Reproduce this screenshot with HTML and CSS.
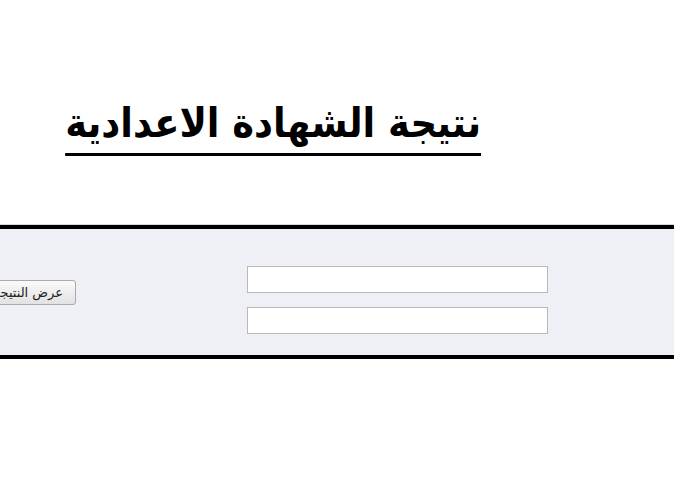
FILE: index.html
```html
<!DOCTYPE html>
<html lang="ar">
<head>
  <meta charset="UTF-8">
  <title>نتيجة الشهادة الاعدادية</title>
  <link rel="stylesheet" href="styles.css">
</head>
<body>
  <div class="header">
    <h1 class="title">نتيجة الشهادة الاعدادية</h1>
  </div>

  <div class="searchBox">
    <button class="showBtn">عرض النتيجة</button>
    <div class="fields">
      <input type="text" class="field">
      <input type="text" class="field">
    </div>
  </div>
</body>
</html>
```

FILE: styles.css
```css
html, body {
  margin: 0;
  padding: 0;
  background: #fff;
  overflow: hidden;
}

.header {
  padding-top: 100px;
  padding-right: 193px;
  text-align: right;
  height: 128px;
  box-sizing: border-box;
}

.title {
  display: inline-block;
  margin: 0;
  font-family: "DejaVu Sans Condensed", "DejaVu Sans", sans-serif;
  font-size: 41px;
  line-height: 46px;
  font-weight: bold;
  color: #000;
  direction: rtl;
  text-decoration: underline;
  text-decoration-thickness: 3px;
  text-underline-offset: 16px;
}

.searchBox {
  margin-top: 96px;
  border-top: 1px solid #d8d8d8;
  display: flex;
  align-items: center;
  height: 126px;
  background-color: #eef0f5;
  border-bottom: 4px solid #000;
  box-shadow: inset 0 4px 0 #000;
  padding-top: 4px;
}

.showBtn {
  margin-left: -32px;
  width: 108px;
  height: 25px;
  font-family: "DejaVu Sans", sans-serif;
  font-size: 13px;
  color: #222;
  border: 1px solid #a9a9a9;
  border-radius: 3px;
  background: linear-gradient(#fafafa, #e2e2e2);
  direction: rtl;
  text-align: right;
  padding: 0 12px;
  white-space: nowrap;
  overflow: hidden;
}

.fields {
  display: flex;
  flex-direction: column;
  gap: 14px;
  margin-left: 171px;
  margin-top: 16px;
}

.field {
  width: 301px;
  height: 27px;
  box-sizing: border-box;
  border: 1px solid #b9b9b9;
  background: #fff;
  margin: 0;
}
```
